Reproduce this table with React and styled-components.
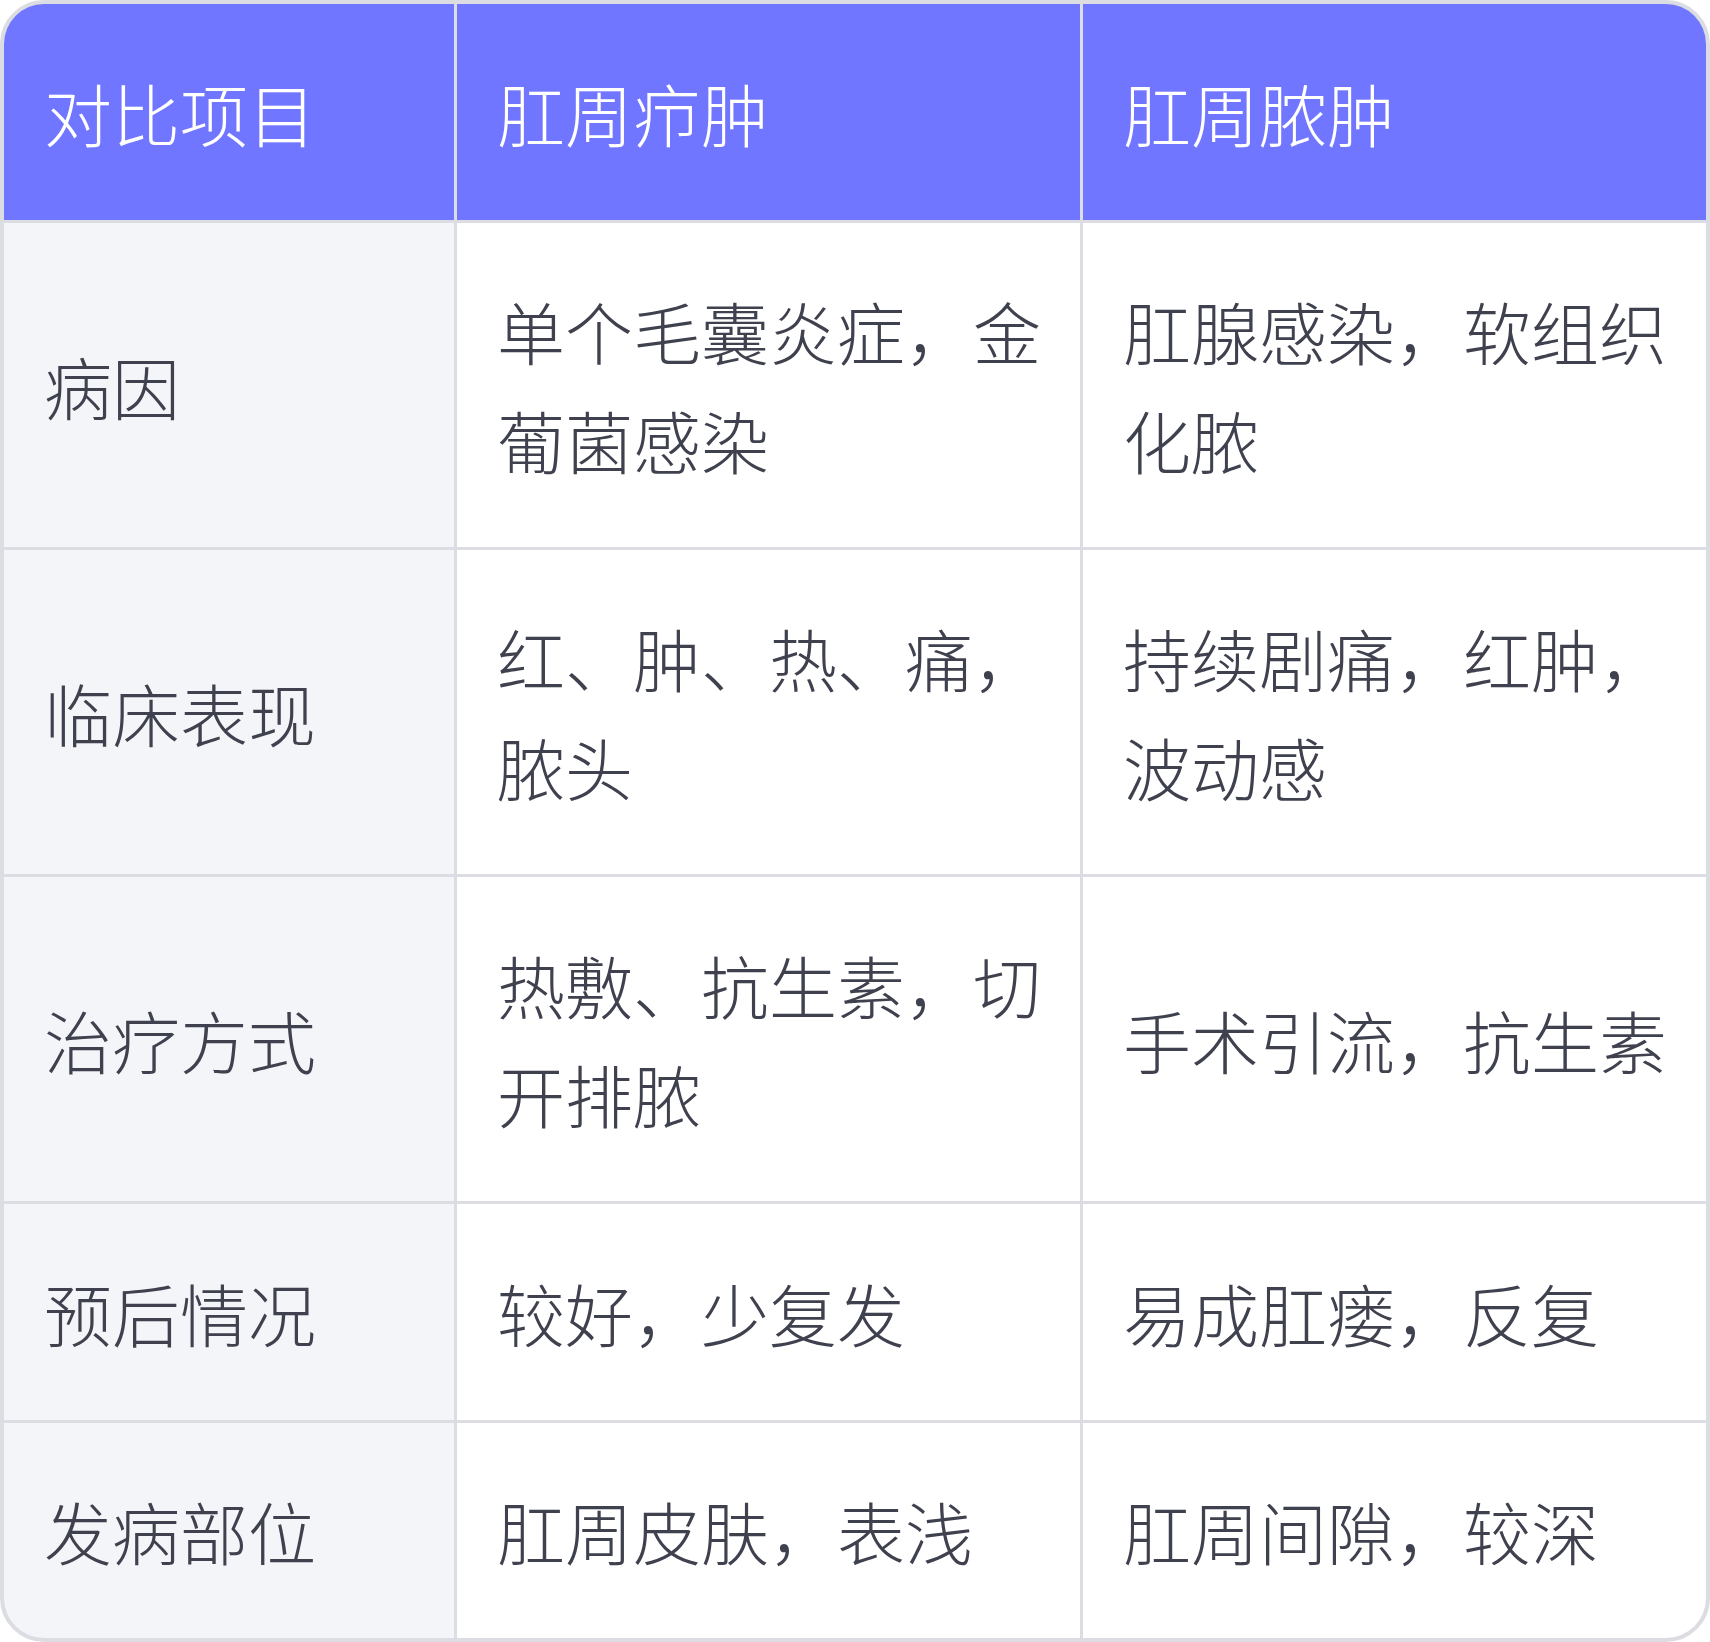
import React from 'react';
import styled, { createGlobalStyle } from 'styled-components';

const GlobalStyle = createGlobalStyle`
  html, body {
    margin: 0;
    padding: 0;
    background: #ffffff;
  }
  * {
    box-sizing: border-box;
  }
`;

const Table = styled.div`
  width: 1710px;
  display: grid;
  grid-template-columns: 450px 1fr 1fr;
  grid-template-rows: 216px 324px 324px 324px 216px 215px;
  gap: 3px;
  background: #dcdde2;
  border: 4px solid #dcdde2;
  border-radius: 44px;
  overflow: hidden;
  font-family: "Noto Sans CJK SC", "Noto Sans", sans-serif;
  font-size: 68px;
  line-height: 109px;
  font-weight: 300;
`;

const Cell = styled.div`
  display: flex;
  align-items: center;
  padding: 0 36px 0 40px;
  background: ${(p) => (p.$head ? '#7076ff' : p.$label ? '#f4f5f9' : '#ffffff')};
  color: ${(p) => (p.$head ? '#ffffff' : '#3f424e')};
`;

const Text = styled.span`
  display: block;
`;

const head = ['对比项目', '肛周疖肿', '肛周脓肿'];

const rows = [
  ['病因', '单个毛囊炎症，金葡菌感染', '肛腺感染，软组织化脓'],
  ['临床表现', '红、肿、热、痛，脓头', '持续剧痛，红肿，波动感'],
  ['治疗方式', '热敷、抗生素，切开排脓', '手术引流，抗生素'],
  ['预后情况', '较好，少复发', '易成肛瘘，反复'],
  ['发病部位', '肛周皮肤，表浅', '肛周间隙，较深'],
];

export default function App() {
  return (
    <>
      <GlobalStyle />
      <Table>
        {head.map((h) => (
          <Cell key={h} $head>
            <Text>{h}</Text>
          </Cell>
        ))}
        {rows.map((r) => (
          <React.Fragment key={r[0]}>
            <Cell $label>
              <Text>{r[0]}</Text>
            </Cell>
            <Cell>
              <Text>{r[1]}</Text>
            </Cell>
            <Cell>
              <Text>{r[2]}</Text>
            </Cell>
          </React.Fragment>
        ))}
      </Table>
    </>
  );
}
